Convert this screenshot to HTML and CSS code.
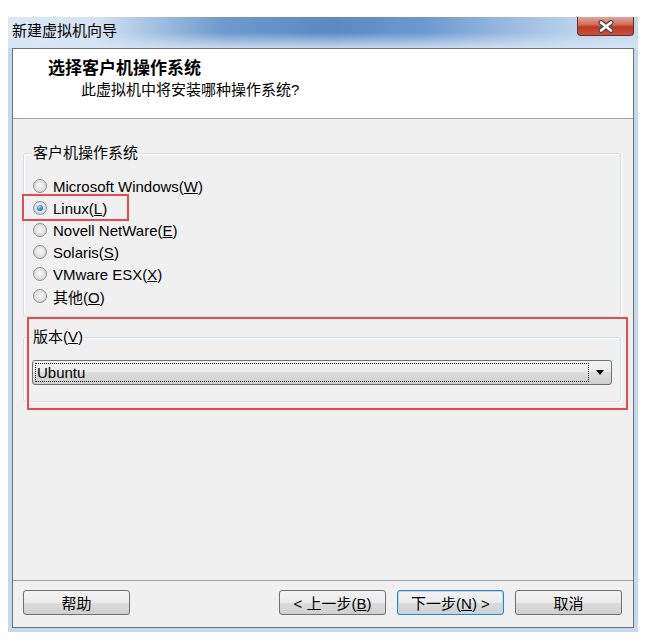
FILE: index.html
```html
<!DOCTYPE html>
<html lang="zh-CN">
<head>
  <meta charset="UTF-8">
  <title>新建虚拟机向导</title>
  <link rel="stylesheet" href="styles.css">
</head>
<body>

<div class="window">
  <div class="titlebar">
    <span class="title">新建虚拟机向导</span>
    <button class="close">
      <svg width="20" height="13" viewBox="0 0 20 13">
        <path d="M5 2.5 L15 10.5 M15 2.5 L5 10.5" stroke="#4a4a4a" stroke-width="5" stroke-linecap="round"/>
        <path d="M5 2.5 L15 10.5 M15 2.5 L5 10.5" stroke="#fff" stroke-width="2.6" stroke-linecap="round"/>
      </svg>
    </button>
  </div>

  <div class="client">
    <div class="header">
      <div class="header-title">选择客户机操作系统</div>
      <div class="header-sub">此虚拟机中将安装哪种操作系统?</div>
    </div>

    <div class="content">
      <fieldset class="group os-group">
        <legend>客户机操作系统</legend>
        <div class="radio-row"><span class="radio"></span><span>Microsoft Windows(<u>W</u>)</span></div>
        <div class="radio-row"><span class="radio checked"></span><span>Linux(<u>L</u>)</span></div>
        <div class="radio-row"><span class="radio"></span><span>Novell NetWare(<u>E</u>)</span></div>
        <div class="radio-row"><span class="radio"></span><span>Solaris(<u>S</u>)</span></div>
        <div class="radio-row"><span class="radio"></span><span>VMware ESX(<u>X</u>)</span></div>
        <div class="radio-row"><span class="radio"></span><span>其他(<u>O</u>)</span></div>
      </fieldset>

      <fieldset class="group version-group">
        <legend>版本(<u>V</u>)</legend>
        <div class="combo">
          <div class="combo-focus">Ubuntu</div>
          <div class="combo-arrow"><span class="arrow"></span></div>
        </div>
      </fieldset>
    </div>

    <div class="footer">
      <button class="btn">帮助</button>
      <span class="spacer"></span>
      <button class="btn">&lt; 上一步(<u>B</u>)</button>
      <button class="btn default">下一步(<u>N</u>) &gt;</button>
      <button class="btn">取消</button>
    </div>
  </div>
</div>

<!-- annotation boxes drawn over the dialog -->
<div class="mark mark-linux"></div>
<div class="mark mark-version"></div>

</body>
</html>
```

FILE: styles.css
```css
body {
  margin: 0;
  background: #fff;
  font-family: 'Liberation Sans', 'Noto Sans CJK SC', sans-serif;
  font-size: 15px;
  color: #000;
}

.window {
  width: 630px;
  margin: 17px 0 0 8px;
  padding-bottom: 4px;
  background: #c4d9ee;
}

.titlebar {
  height: 31px;
  display: flex;
  justify-content: space-between;
  align-items: flex-start;
  background:
    linear-gradient(to bottom, rgba(255, 255, 255, 0) 0%, rgba(255, 255, 255, 0) 50%, rgba(214, 230, 246, 0.85) 100%),
    linear-gradient(to right, #dce8f5 0%, #d4e2f1 14%, #a9c5e4 22%, #6f9acc 34%, #5a8ac3 52%, #6c99cf 66%, #9cbbe0 80%, #bad2ec 90%, #c4d9ee 100%);
}

.title {
  padding: 4px 0 0 4px;
  line-height: 20px;
}

.close {
  width: 57px;
  height: 19px;
  margin-right: 4px;
  padding: 0;
  border: 1px solid #6b2a22;
  border-top: none;
  border-radius: 0 0 4px 4px;
  background: linear-gradient(#e2a596 0%, #d3705f 40%, #bd3a25 55%, #c9513a 100%);
  display: flex;
  align-items: center;
  justify-content: center;
}

.client {
  height: 580px;
  margin: 0 4px;
  box-sizing: border-box;
  border: 1px solid #717171;
  background: #f0f0f0;
  display: flex;
  flex-direction: column;
}

.header {
  height: 70px;
  box-sizing: border-box;
  padding: 9px 0 0 35px;
  background: #fff;
  border-bottom: 1px solid #a0a0a0;
  line-height: 21px;
}

.header-title {
  font-weight: bold;
  font-size: 17px;
}

.header-sub {
  padding-left: 33px;
}

.content {
  flex: 1;
  padding: 24px 12px 0 10px;
}

.group {
  margin: 0;
  padding: 12px 8px 9px 8px;
  border: 1px solid #d5dfe5;
  border-radius: 3px;
  box-shadow: inset 1px 1px 0 #fff, 1px 1px 0 #fff;
}

.group legend {
  padding: 0 1px;
  line-height: 20px;
}

.radio-row {
  height: 22px;
  display: flex;
  align-items: center;
  gap: 6px;
}

.radio {
  width: 14px;
  height: 14px;
  margin-left: 1px;
  box-sizing: border-box;
  border: 1px solid #8e8f8f;
  border-radius: 50%;
  background: radial-gradient(circle at 50% 45%, #fafafa 0%, #e6e6e6 45%, #c4c4c4 100%);
  position: relative;
}

.radio.checked::after {
  content: '';
  position: absolute;
  left: 3px;
  top: 3px;
  width: 6px;
  height: 6px;
  border-radius: 50%;
  background: radial-gradient(circle at 40% 35%, #a6e4ff 0%, #2b8ad8 50%, #0e4c8c 100%);
}

.version-group {
  margin-top: 10px;
  padding: 13px 8px 16px 8px;
}

.combo {
  height: 25px;
  box-sizing: border-box;
  border: 1px solid #707070;
  border-radius: 3px;
  padding: 2px 0 2px 2px;
  background: linear-gradient(#f2f2f2 0%, #ebebeb 50%, #dddddd 50%, #cfcfcf 100%);
  display: flex;
}

.combo-focus {
  flex: 1;
  border: 1px dotted #000;
  padding-left: 1px;
  line-height: 17px;
}

.combo-arrow {
  width: 22px;
  display: flex;
  align-items: center;
  justify-content: center;
}

.arrow {
  width: 0;
  height: 0;
  border-left: 4px solid transparent;
  border-right: 4px solid transparent;
  border-top: 5px solid #000;
}

.footer {
  height: 47px;
  box-sizing: border-box;
  padding: 9px 11px 0 10px;
  border-top: 1px solid #a0a0a0;
  display: flex;
  align-items: flex-start;
  gap: 11px;
}

.spacer {
  flex: 1;
}

.btn {
  width: 107px;
  height: 25px;
  padding: 0;
  border: 1px solid #707070;
  border-radius: 3px;
  background: linear-gradient(#f2f2f2 0%, #ebebeb 50%, #dddddd 50%, #cfcfcf 100%);
  font-family: inherit;
  font-size: 15px;
  color: #000;
}

.btn.default {
  border-color: #3c7fb1;
  box-shadow: inset 0 0 0 1px #a8dcf8;
}

.mark {
  position: absolute;
  box-sizing: border-box;
  border: 2px solid #e84b4d;
}

.mark-linux {
  left: 22px;
  top: 194px;
  width: 107px;
  height: 27px;
}

.mark-version {
  left: 27px;
  top: 317px;
  width: 601px;
  height: 93px;
}
```
